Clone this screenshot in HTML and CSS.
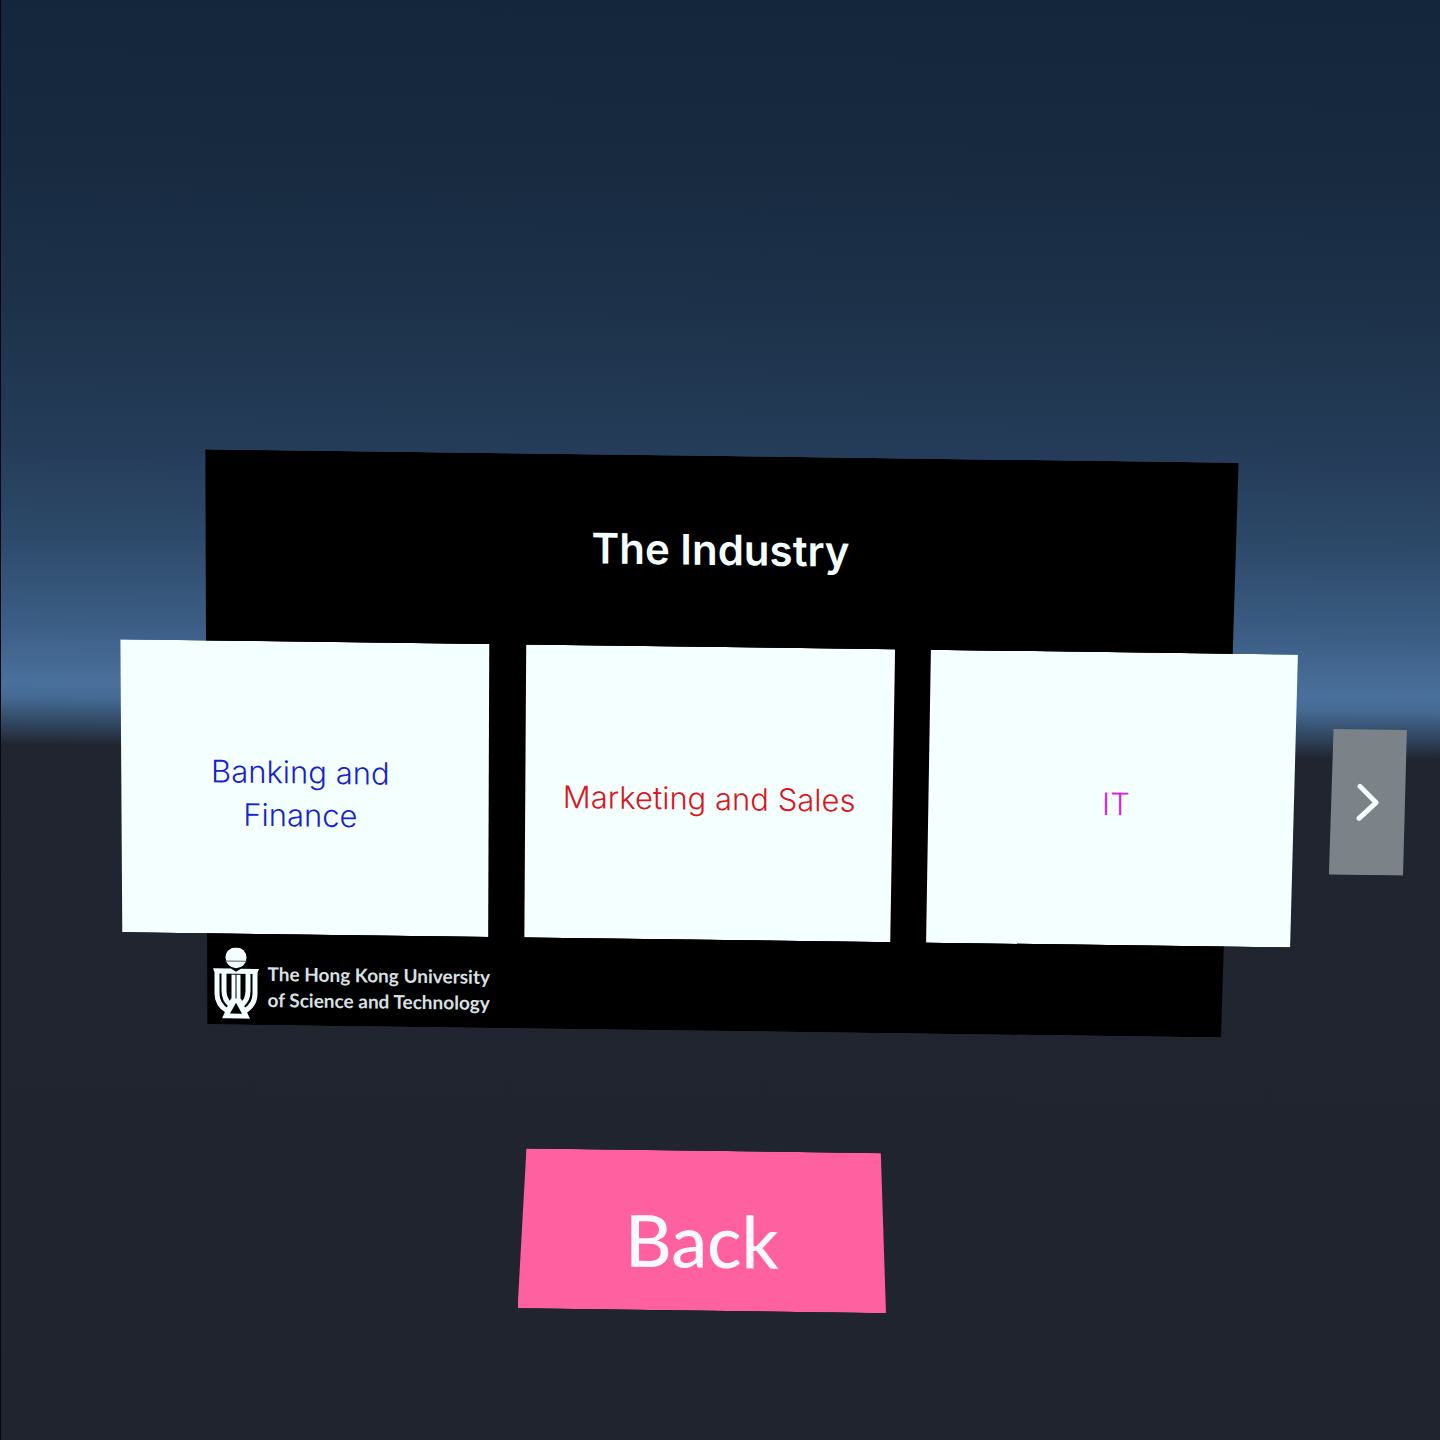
FILE: index.html
```
<!DOCTYPE html>
<html lang="en">
<head>
  <meta charset="UTF-8" />
  <meta name="viewport" content="width=device-width, initial-scale=1.0"/>
  <title>The Industry</title>
  <link rel="stylesheet" href="styles.css">
</head>
<body>
  <main class="scene">
    <section class="board">
      <h1 class="board-title">The Industry</h1>

      <div class="card-row">
        <button type="button" class="card card-left">Banking and<br>Finance</button>
        <button type="button" class="card card-middle">Marketing and Sales</button>
        <button type="button" class="card card-right">IT</button>
        <button type="button" class="next" aria-label="Next">
          <svg class="next-icon" viewBox="0 0 24 40">
            <path d="M4 4 L20 20 L3 36"/>
          </svg>
        </button>
      </div>

      <footer class="school">
        <svg class="school-logo" viewBox="0 0 46 71">
          <circle cx="23" cy="10" r="10.5" fill="#f4ffff"/>
          <path d="M12.500 13.500H33.500" stroke="#56606b" stroke-width="1" fill="none"/>
          <path d="M0 21 H18 L23 24 L28 21 H46 L44 26 H2 Z" fill="#f4ffff"/>
          <path d="M4 25 V46 Q4 57 14 63 M11 25 V43 Q11 52 17 57 M42 25 V46 Q42 57 32 63 M35 25 V43 Q35 52 29 57" stroke="#f4ffff" stroke-width="5" fill="none"/>
          <path d="M20.500 27 V54 M25.500 27 V54" stroke="#f4ffff" stroke-width="4" fill="none"/>
          <path d="M18 51 H28 L37 71 H9 Z" fill="#f4ffff"/>
          <path d="M23 55 L29 66 H17 Z" fill="#000"/>
        </svg>
        <p class="school-name">The Hong Kong University<br>of Science and Technology</p>
      </footer>
    </section>

    <button type="button" class="back">Back</button>
  </main>
</body>
</html>
```
FILE: styles.css
```
* {
  box-sizing: border-box;
}

body {
  margin: 0;
  min-height: 100vh;
  overflow: hidden;
  border-left: 1px solid #05070b;
  font-family: Inter, "Noto Sans", sans-serif;
  color: #f4ffff;
  /* night sky, bright horizon, dark ground */
  background: linear-gradient(180.6deg,
    #14263b 0%,
    #172a40 12%,
    #1d324a 22%,
    #253d5a 32%,
    #2d4a6a 38%,
    #3c5e86 44%,
    #4a719c 48%,
    #446992 49%,
    #2e4058 51%,
    #212530 52.2%,
    #20242e 100%);
}

/* everything is seen slightly from the left */
.scene {
  min-height: 100vh;
  padding-top: 456px;
  transform: skewY(0.75deg);
}

button {
  border: none;
  padding: 0;
  font-family: inherit;
  cursor: pointer;
}

.board {
  position: relative;
}

.board::before {
  content: "";
  position: absolute;
  top: 0;
  bottom: 0;
  left: 14.2%;
  right: 14%;
  z-index: -1;
  background: #000;
  clip-path: polygon(0 0, 100% 0, 98.3% 100%, 0.2% 100%);
}

.board-title {
  margin: 0;
  padding: 66px 0 69px;
  font-size: 42px;
  line-height: 56px;
  font-weight: 600;
  text-align: center;
}

.card-row {
  display: grid;
  grid-template-columns: repeat(3, minmax(0, 1fr)) 78px;
  align-items: center;
  gap: 31px;
  margin: 0 2.3% 0 8.3%;
}

.card {
  min-height: 293px;
  padding-top: 10px;
  background: #f4ffff;
  font-size: 31px;
  line-height: 43px;
  font-weight: 300;
}

.card-left {
  padding-right: 12px;
  color: #1722cf;
  clip-path: polygon(0 0, 99.2% 0, 98.9% 100%, 0.5% 100%);
}

.card-middle {
  color: #dc1420;
  clip-path: polygon(0.8% 0, 100% 0, 98.7% 100%, 0.3% 100%);
}

.card-right {
  padding-left: 8px;
  color: #dc1ee0;
  clip-path: polygon(1.3% 0, 100% 0, 97.9% 100%, 0 100%);
}

.next {
  display: flex;
  align-items: center;
  justify-content: center;
  height: 146px;
  background: #7c8388;
  clip-path: polygon(6% 0, 100% 0, 95% 100%, 0 100%);
}

.next-icon {
  width: 24px;
  height: 40px;
  fill: none;
  stroke: #f4ffff;
  stroke-width: 5;
  stroke-linecap: round;
  stroke-linejoin: round;
}

.school {
  display: flex;
  align-items: center;
  gap: 9px;
  padding: 14px 0 6px 14.7%;
}

.school-logo {
  width: 46px;
  height: 71px;
}

.school-name {
  margin: 0;
  padding-top: 6px;
  font-family: Lato, "Noto Sans", sans-serif;
  font-size: 19px;
  line-height: 26px;
  font-weight: 700;
  color: #d9e0e4;
}

.back {
  display: block;
  width: 25.6%;
  min-height: 160px;
  margin: 120px 0 0 35.9%;
  padding-top: 18px;
  background: #ff609f;
  color: #f9f9ff;
  font-family: Lato, "Noto Sans", sans-serif;
  font-size: 72px;
  line-height: 88px;
  font-weight: 500;
  clip-path: polygon(2.4% 0, 98.6% 0, 100% 100%, 0 100%);
}
```
